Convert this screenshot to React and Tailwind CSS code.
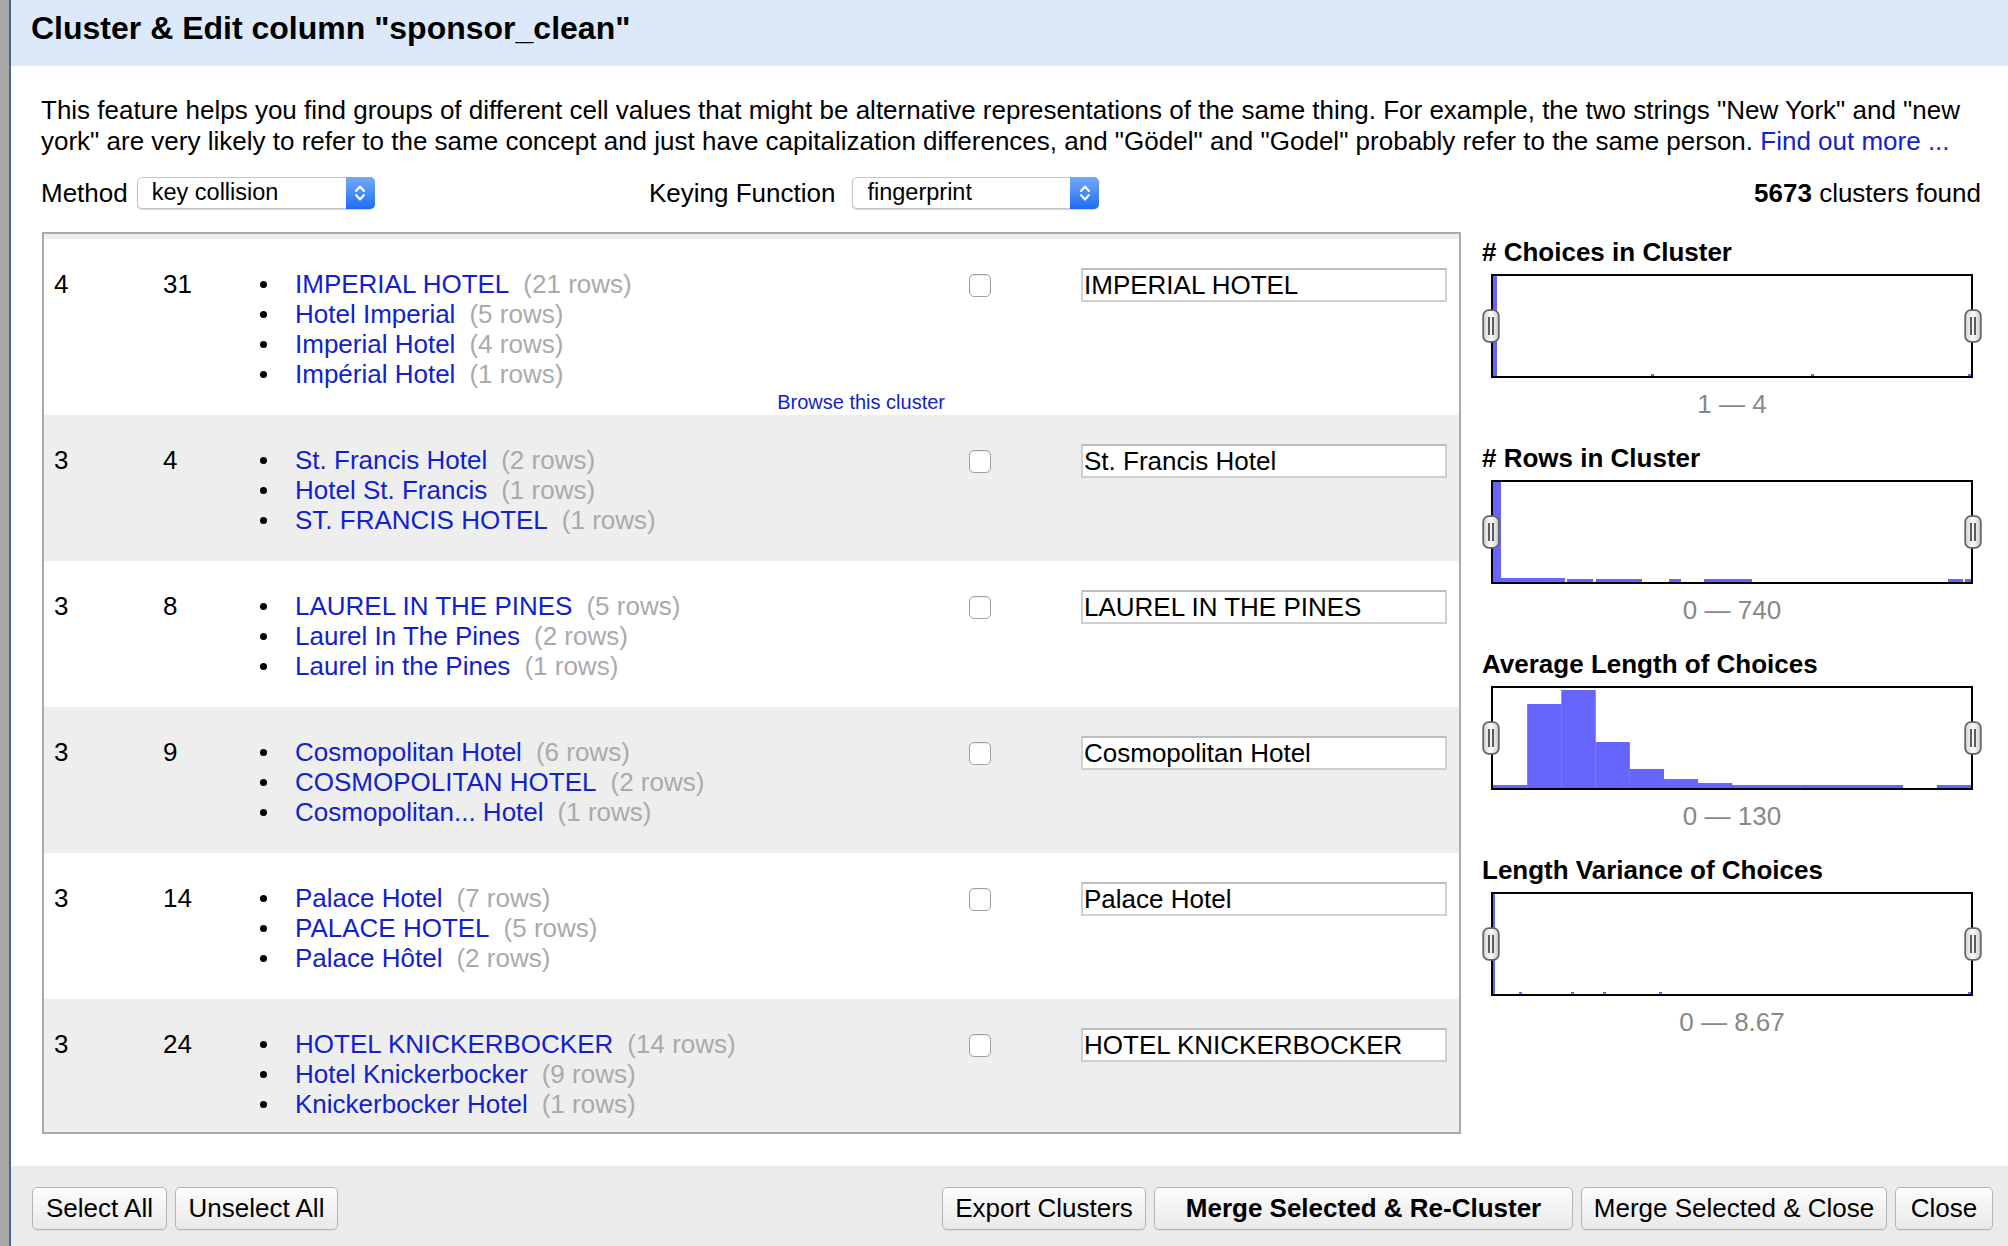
import React from "react";

const FONT = { fontFamily: '"Liberation Sans", Arial, Helvetica, sans-serif' };

const rows = [
  {
    a: "4",
    b: "31",
    items: [
      ["IMPERIAL HOTEL", "21"],
      ["Hotel Imperial", "5"],
      ["Imperial Hotel", "4"],
      ["Impérial Hotel", "1"],
    ],
    value: "IMPERIAL HOTEL",
    browse: true,
  },
  {
    a: "3",
    b: "4",
    items: [
      ["St. Francis Hotel", "2"],
      ["Hotel St. Francis", "1"],
      ["ST. FRANCIS HOTEL", "1"],
    ],
    value: "St. Francis Hotel",
  },
  {
    a: "3",
    b: "8",
    items: [
      ["LAUREL IN THE PINES", "5"],
      ["Laurel In The Pines", "2"],
      ["Laurel in the Pines", "1"],
    ],
    value: "LAUREL IN THE PINES",
  },
  {
    a: "3",
    b: "9",
    items: [
      ["Cosmopolitan Hotel", "6"],
      ["COSMOPOLITAN HOTEL", "2"],
      ["Cosmopolitan... Hotel", "1"],
    ],
    value: "Cosmopolitan Hotel",
  },
  {
    a: "3",
    b: "14",
    items: [
      ["Palace Hotel", "7"],
      ["PALACE HOTEL", "5"],
      ["Palace Hôtel", "2"],
    ],
    value: "Palace Hotel",
  },
  {
    a: "3",
    b: "24",
    items: [
      ["HOTEL KNICKERBOCKER", "14"],
      ["Hotel Knickerbocker", "9"],
      ["Knickerbocker Hotel", "1"],
    ],
    value: "HOTEL KNICKERBOCKER",
  },
];

function Select({ width, label }) {
  return (
    <div
      className="flex h-[32px] items-stretch rounded-[5px] border border-[#c6c6c6] bg-white shadow-[0_1px_1px_rgba(0,0,0,0.18)]"
      style={{ width }}
    >
      <div className="flex flex-1 items-center pl-[14px] text-[23.5px] text-black">{label}</div>
      <div className="-my-px -mr-px flex w-[29px] items-center justify-center rounded-r-[5px] bg-gradient-to-b from-[#72aafb] to-[#1a6cf2]">
        <svg width="12" height="22" viewBox="0 0 12 22">
          <path d="M2 9 L6 4.5 L10 9" fill="none" stroke="white" strokeWidth="2" strokeLinecap="round" strokeLinejoin="round" />
          <path d="M2 13 L6 17.5 L10 13" fill="none" stroke="white" strokeWidth="2" strokeLinecap="round" strokeLinejoin="round" />
        </svg>
      </div>
    </div>
  );
}

function Handle() {
  return (
    <svg width="18" height="34" viewBox="0 0 18 34">
      <defs>
        <linearGradient id="hg" x1="0" x2="1" y1="0" y2="0">
          <stop offset="0" stopColor="#d4d4d4" />
          <stop offset="0.5" stopColor="#fafafa" />
          <stop offset="1" stopColor="#cbcbcb" />
        </linearGradient>
      </defs>
      <rect x="1.2" y="1.2" width="15.6" height="31.6" rx="5.5" fill="url(#hg)" stroke="#666" strokeWidth="1.8" />
      <line x1="7" y1="8" x2="7" y2="26" stroke="#2a2a2a" strokeWidth="1.5" />
      <line x1="11" y1="8" x2="11" y2="26" stroke="#2a2a2a" strokeWidth="1.5" />
    </svg>
  );
}

function Chart({ bars }) {
  return (
    <div className="relative ml-[9px] mt-[7px] h-[104px] w-[482px] border-2 border-black bg-white">
      <svg width="478" height="100" viewBox="0 0 478 100" className="block">
        {bars.map(([x, w, h], i) => (
          <rect key={i} x={x} y={100 - h} width={w} height={h} fill="#6666ff" />
        ))}
      </svg>
      <div className="absolute left-[-11px] top-[33px]">
        <Handle />
      </div>
      <div className="absolute right-[-11px] top-[33px]">
        <Handle />
      </div>
    </div>
  );
}

const binW = 478 / 14;
const avgHeights = [3, 84, 98, 46, 19, 9, 5, 3, 3, 3, 3, 3, 0, 3];

const charts = [
  {
    title: "# Choices in Cluster",
    range: "1 — 4",
    bars: [
      [0, 4, 100],
      [158, 3, 2],
      [318, 3, 2],
      [475, 3, 2],
    ],
  },
  {
    title: "# Rows in Cluster",
    range: "0 — 740",
    bars: [
      [0, 8, 100],
      [8, 64, 4],
      [74, 26, 3],
      [103, 46, 3],
      [176, 12, 3],
      [211, 48, 3],
      [455, 15, 3],
      [472, 6, 3],
    ],
  },
  {
    title: "Average Length of Choices",
    range: "0 — 130",
    bars: avgHeights.map((h, i) => [i * binW, binW + 0.3, h]),
  },
  {
    title: "Length Variance of Choices",
    range: "0 — 8.67",
    bars: [
      [0, 2, 100],
      [26, 3, 2],
      [78, 3, 2],
      [110, 3, 2],
      [166, 3, 2],
      [475, 3, 2],
    ],
  },
];

function Button({ children, width, bold }) {
  return (
    <button
      className={`flex h-[43px] items-center justify-center rounded-[5px] border border-[#b4b4b4] bg-gradient-to-b from-[#fdfdfd] to-[#e9e9e9] text-[26px] text-black shadow-[0_1px_0_rgba(0,0,0,0.05)] ${
        bold ? "font-bold" : ""
      }`}
      style={{ width }}
    >
      {children}
    </button>
  );
}

function Row({ row, gray }) {
  return (
    <div className={`flex ${gray ? "bg-[#eeeeee]" : "bg-white"}`}>
      <div className="w-[119px] pl-[10px] pt-[30px] leading-[30px]">{row.a}</div>
      <div className="w-[96px] pt-[30px] leading-[30px]">{row.b}</div>
      <div className="flex w-[686px] flex-col pt-[30px]">
        {row.items.map(([name, n], i) => (
          <div key={i} className="flex h-[30px] items-center leading-[30px]">
            <span className="flex w-[36px] items-center">
              <span className="ml-[1px] block h-[7px] w-[7px] rounded-full bg-black" />
            </span>
            <span className="text-[#1122cc]">{name}</span>
            <span className="ml-[14px] text-[#aaaaaa]">({n} rows)</span>
          </div>
        ))}
        <div className="flex h-[26px] items-center justify-end text-[20px] text-[#1122cc]">
          {row.browse ? "Browse this cluster" : ""}
        </div>
      </div>
      <div className="w-[136px] pl-[24px] pt-[29px]">
        <div className="flex h-[34px] items-center">
          <div className="h-[23px] w-[22px] rounded-[5px] border border-[#a0a0a0] bg-white shadow-[inset_0_1px_1px_rgba(0,0,0,0.08)]" />
        </div>
      </div>
      <div className="pt-[29px]">
        <div className="flex h-[34px] w-[366px] items-center border-2 border-[#cfcfcf] border-t-[#bdbdbd] bg-white pl-[1px] text-black">
          {row.value}
        </div>
      </div>
    </div>
  );
}

export default function App() {
  return (
    <div className="flex h-[1246px] w-[2008px] overflow-hidden bg-white text-black" style={FONT}>
      <div className="w-[9px] bg-[#a8a8a8]" />
      <div className="w-[2px] bg-[#4b6788]" />
      <div className="flex flex-1 flex-col">
        <div className="flex h-[66px] items-start bg-[#dce9fa] pl-[20px] pt-[12px]">
          <h1 className="text-[32px] font-bold leading-none">Cluster &amp; Edit column &quot;sponsor_clean&quot;</h1>
        </div>

        <div className="px-[30px] pt-[29px] text-[26px]">
          <p className="leading-[31px]">
            This feature helps you find groups of different cell values that might be alternative representations
            of the same thing. For example, the two strings &quot;New York&quot; and &quot;new york&quot; are very
            likely to refer to the same concept and just have capitalization differences, and &quot;Gödel&quot; and
            &quot;Godel&quot; probably refer to the same person. <span className="text-[#1122cc]">Find out more ...</span>
          </p>

          <div className="mt-[20px] flex h-[32px] items-center">
            <div className="flex w-[608px] items-center">
              <span className="mr-[9px] leading-none">Method</span>
              <Select width={238} label="key collision" />
            </div>
            <div className="flex items-center">
              <span className="mr-[17px] leading-none">Keying Function</span>
              <Select width={247} label="fingerprint" />
            </div>
            <div className="ml-auto mr-[-3px] leading-none">
              <b>5673</b> clusters found
            </div>
          </div>

          <div className="mt-[23px] flex">
            <div className="ml-[1px] h-[902px] w-[1419px] overflow-hidden border-2 border-[#aaaaaa]">
              <div className="h-[5px] bg-[#eeeeee]" />
              {rows.map((r, i) => (
                <Row key={i} row={r} gray={i % 2 === 1} />
              ))}
            </div>

            <div className="ml-[21px] flex flex-col pt-[5px]">
              {charts.map((c, i) => (
                <div key={i} className={i > 0 ? "mt-[24px]" : ""}>
                  <div className="h-[30px] font-bold leading-[30px]">{c.title}</div>
                  <Chart bars={c.bars} />
                  <div className="ml-[9px] mt-[11px] h-[30px] w-[482px] text-center leading-[30px] text-[#888888]">
                    {c.range}
                  </div>
                </div>
              ))}
            </div>
          </div>
        </div>

        <div className="mt-auto flex h-[80px] items-start bg-[#ebebeb] pl-[21px] pr-[15px] pt-[21px]">
          <div className="flex gap-[8px]">
            <Button width={135}>Select All</Button>
            <Button width={163}>Unselect All</Button>
          </div>
          <div className="ml-auto flex gap-[8px]">
            <Button width={204}>Export Clusters</Button>
            <Button width={419} bold>
              Merge Selected &amp; Re-Cluster
            </Button>
            <Button width={306}>Merge Selected &amp; Close</Button>
            <Button width={98}>Close</Button>
          </div>
        </div>
      </div>
    </div>
  );
}
